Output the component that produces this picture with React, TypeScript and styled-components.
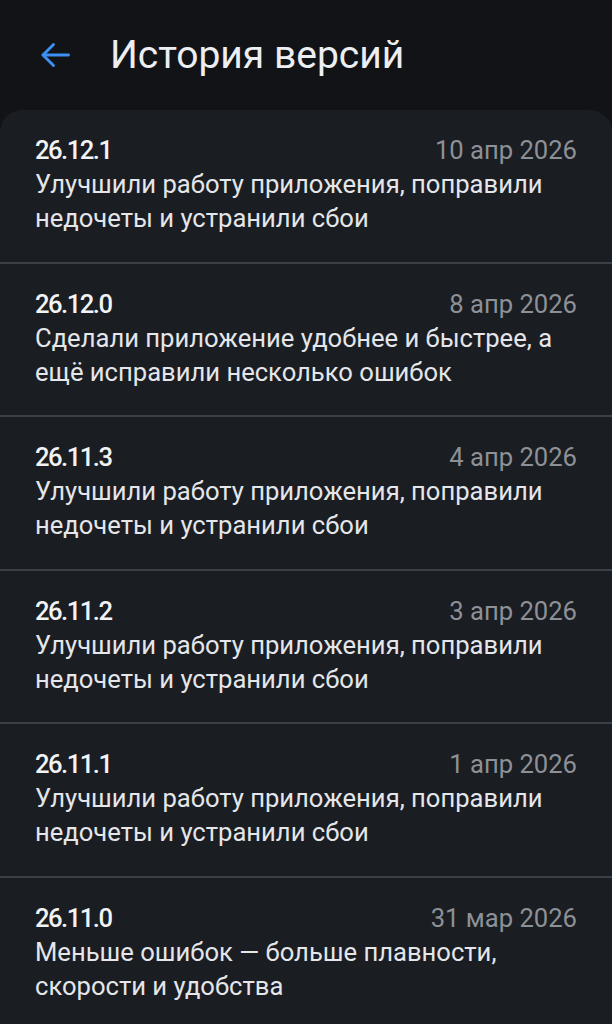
import React from "react";
import styled, { createGlobalStyle } from "styled-components";

const GlobalStyle = createGlobalStyle`
  html, body {
    margin: 0;
    padding: 0;
    background: #111317;
  }
  body {
    font-family: Roboto, "Noto Sans", sans-serif;
    -webkit-font-smoothing: antialiased;
  }
`;

const Page = styled.div`
  width: 612px;
  min-height: 1024px;
  background: #111317;
  color: #eceef1;
  overflow: hidden;
`;

const Header = styled.header`
  height: 110px;
  display: flex;
  align-items: center;
  padding: 0 0 0 36px;
  box-sizing: border-box;
  gap: 36px;
`;

const BackButton = styled.button`
  width: 38px;
  height: 38px;
  padding: 0;
  border: 0;
  background: none;
  display: flex;
  align-items: center;
  justify-content: center;
  color: #3d8ff0;
`;

const Title = styled.h1`
  margin: 0;
  font-size: 39px;
  font-weight: 400;
  color: #eceef1;
  letter-spacing: 0;
`;

const Card = styled.section`
  background: #1a1d22;
  border-radius: 22px 22px 0 0;
`;

const Row = styled.div<{ $last?: boolean }>`
  padding: 23px 35px 26.6px;
  border-bottom: ${(p) => (p.$last ? "none" : "2px solid #3b3f46")};
`;

const RowTop = styled.div`
  display: flex;
  justify-content: space-between;
  align-items: baseline;
  line-height: 34px;
`;

const Version = styled.span`
  font-size: 25.6px;
  font-weight: 500;
  letter-spacing: -1.5px;
  color: #f2f3f5;
`;

const Date = styled.span`
  font-size: 25.6px;
  color: #8d9197;
`;

const Description = styled.p`
  margin: 0;
  font-size: 25.6px;
  line-height: 34px;
  color: #e4e6ea;
`;

const versions = [
  { v: "26.12.1", d: "10 апр 2026", text: "Улучшили работу приложения, поправили недочеты и устранили сбои" },
  { v: "26.12.0", d: "8 апр 2026", text: "Сделали приложение удобнее и быстрее, а ещё исправили несколько ошибок" },
  { v: "26.11.3", d: "4 апр 2026", text: "Улучшили работу приложения, поправили недочеты и устранили сбои" },
  { v: "26.11.2", d: "3 апр 2026", text: "Улучшили работу приложения, поправили недочеты и устранили сбои" },
  { v: "26.11.1", d: "1 апр 2026", text: "Улучшили работу приложения, поправили недочеты и устранили сбои" },
  { v: "26.11.0", d: "31 мар 2026", text: "Меньше ошибок — больше плавности, скорости и удобства" },
];

const ArrowIcon: React.FC = () => (
  <svg width="36" height="36" viewBox="0 0 24 24" fill="none" stroke="currentColor" strokeWidth="1.9" strokeLinecap="round" strokeLinejoin="round">
    <path d="M21 12H4" />
    <path d="M11 5l-7 7 7 7" />
  </svg>
);

const App: React.FC = () => {
  return (
    <Page>
      <GlobalStyle />
      <Header>
        <BackButton aria-label="Назад">
          <ArrowIcon />
        </BackButton>
        <Title>История версий</Title>
      </Header>
      <Card>
        {versions.map((item, i) => (
          <Row key={item.v} $last={i === versions.length - 1}>
            <RowTop>
              <Version>{item.v}</Version>
              <Date>{item.d}</Date>
            </RowTop>
            <Description>{item.text}</Description>
          </Row>
        ))}
      </Card>
    </Page>
  );
};

export default App;
